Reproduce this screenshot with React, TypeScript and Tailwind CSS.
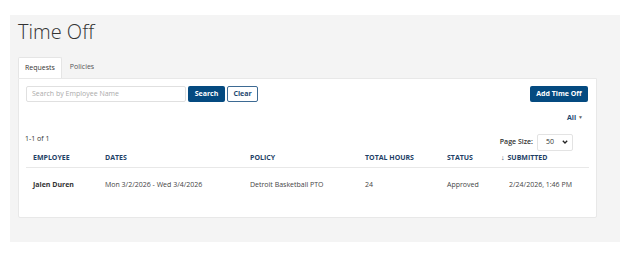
export default function App() {
  const headers = ["EMPLOYEE", "DATES", "POLICY", "TOTAL HOURS", "STATUS"];
  return (
    <div className="w-[630px] h-[256px] bg-white pt-[15px] pl-[10px] font-['Open_Sans',sans-serif] text-[#333]">
      <div className="w-[610px] h-[227px] bg-[#f4f4f4] pl-[8px] pr-[23px]">
        <h1 className="pt-[3px] h-[42px] text-[20px] leading-[28px] font-light text-[#333]">
          Time Off
        </h1>
        <div className="flex h-[21px] text-[7px] items-end">
          <div className="h-[21px] w-[44px] bg-white border border-b-0 border-[#e5e5e5] flex items-center justify-center rounded-t-[2px]">
            Requests
          </div>
          <div className="h-[21px] w-[40px] flex items-center justify-center text-[#555]">Policies</div>
        </div>
        <div className="h-[140px] bg-white border border-[#e8e8e8] rounded-b-[2px] px-[7px] pt-[7px]">
          <div className="flex items-center h-[16px]">
            <div className="w-[160px] h-[16px] border border-[#e0e0e0] rounded-[2px] text-[7px] text-[#aaa] pl-[5px] flex items-center">
              Search by Employee Name
            </div>
            <button className="ml-[2px] w-[37px] h-[16px] bg-[#044a80] text-white text-[7px] font-bold rounded-[2px]">
              Search
            </button>
            <button className="ml-[2px] w-[31px] h-[16px] border border-[#3d6a93] text-[#1e4870] text-[7px] font-bold rounded-[2px] bg-white">
              Clear
            </button>
            <button className="ml-auto mr-[1px] w-[58px] h-[16px] bg-[#044a80] text-white text-[7px] font-bold rounded-[2px]">
              Add Time Off
            </button>
          </div>
          <div className="flex justify-end h-[16px] mt-[8px] pr-[6px] text-[7px] font-bold text-[#1e4870] items-center">
            All <span className="ml-[2px] text-[5px] text-[#666]">▼</span>
          </div>
          <div className="flex items-center h-[18px] mt-[7px] text-[7px]">
            <span className="ml-[-1px] mt-[-5px]">1-1 of 1</span>
            <span className="ml-auto font-semibold text-[#333]">Page Size:</span>
            <div className="ml-[4px] mr-[16px] w-[36px] h-[17px] border border-[#e3e3e3] rounded-[2px] flex items-center pl-[8px] pr-[4px]">
              <span className="text-[7px]">50</span>
              <svg className="ml-auto" width="6" height="4" viewBox="0 0 6 4">
                <path d="M0.8 0.8 L3 3 L5.2 0.8" stroke="#222" strokeWidth="1.3" fill="none" />
              </svg>
            </div>
          </div>
          <div className="grid grid-cols-[72px_145px_115px_82px_54px_1fr] h-[17px] items-center pb-[2px] pl-[7px] text-[7px] font-bold text-[#1e3f66] border-b border-[#e8e8e8]">
            {headers.map((h) => (
              <div key={h}>{h}</div>
            ))}
            <div className="flex items-center">
              <span className="mr-[3px]">↓</span>SUBMITTED
            </div>
          </div>
          <div className="grid grid-cols-[72px_145px_115px_82px_54px_1fr] h-[34px] items-center pl-[7px] text-[7px] text-[#444]">
            <div className="font-bold text-[#333]">Jalen Duren</div>
            <div>Mon 3/2/2026 - Wed 3/4/2026</div>
            <div>Detroit Basketball PTO</div>
            <div>24</div>
            <div>Approved</div>
            <div className="pl-[8px]">2/24/2026, 1:46 PM</div>
          </div>
        </div>
      </div>
    </div>
  );
}
